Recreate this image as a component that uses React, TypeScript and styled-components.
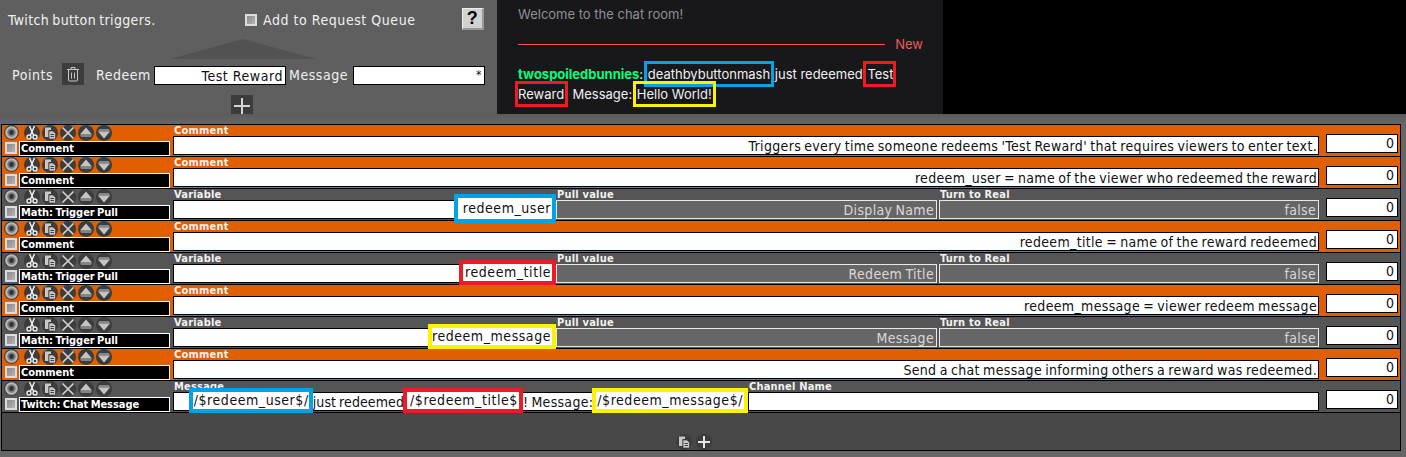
import React from "react";
import styled, { createGlobalStyle } from "styled-components";

const Global = createGlobalStyle`
  html, body { margin: 0; padding: 0; background: #000; }
  #root { width: 1406px; height: 457px; overflow: hidden; }
  * { box-sizing: border-box; }
`;

const UI = `"DejaVu Sans Condensed", "DejaVu Sans", sans-serif`;

const Page = styled.div`
  width: 1406px; height: 457px; background: #000; display: flex; flex-direction: column;
  font-family: ${UI}; font-stretch: condensed;
`;
const Top = styled.div`display: flex; height: 114px; flex: none;`;
const Settings = styled.div`
  width: 497px; background: #5f5f5f; color: #f0f0f0; font-size: 14px; letter-spacing: .55px;
  display: flex; flex-direction: column; align-items: center; overflow: hidden;
`;
const SettingsHead = styled.div`
  width: 100%; height: 27px; margin-top: 5px; display: flex; align-items: center; padding: 0 13px 0 8px;
`;
const Title = styled.div`width: 237px; flex: none; padding-top: 3px; letter-spacing: .35px; word-spacing: -1.1px;`;
const QueueLabel = styled.label`
  display: flex; align-items: center; gap: 6px; flex: 1; padding-top: 3px;
`;
const Check = styled.span`
  width: 12px; height: 12px; flex: none; display: block;
  background: linear-gradient(135deg, #8a8a8a, #b4b4b4); border: 2px solid #dcdcdc;
`;
const Help = styled.div`
  width: 22px; height: 22px; background: #d2d2d2; color: #000; font: bold 18px "Liberation Sans", sans-serif;
  display: flex; align-items: center; justify-content: center;
  border-right: 2px solid #999; border-bottom: 2px solid #999; border-top: 1px solid #eee; border-left: 1px solid #eee;
`;
const Peak = styled.div`
  width: 146px; height: 20px; margin: 7px 11px 0 0; background: #525252; clip-path: polygon(50% 0, 100% 100%, 0 100%); flex: none;
`;
const FormRow = styled.div`
  width: 100%; height: 22px; margin-top: 4px; display: flex; align-items: center; padding-left: 12px; flex: none;
`;
const FormText = styled.span<{ $w: number; $pad?: number }>`
  width: ${p => p.$w}px; padding-left: ${p => p.$pad ?? 0}px; padding-top: 2px; flex: none;
`;
const SquareButton = styled.div`
  width: 22px; height: 22px; background: #3c3c3c; display: flex; align-items: center; justify-content: center; flex: none;
`;
const TextBox = styled.div`
  width: 132px; height: 19px; background: #fff; border: 1px solid #000; color: #111; flex: none; align-self: flex-end;
  display: flex; justify-content: flex-end; align-items: center; padding-right: 2px; line-height: 1;
  letter-spacing: .55px;
`;
const Star = styled.span`align-self: flex-start; font-size: 12px; margin-top: 2px;`;
const PlusBox = styled(SquareButton)`height: 19px; margin: 10px 13px 0 0; align-items: flex-start; padding-top: 3px;`;

const Chat = styled.div`
  width: 446px; background: #18181b; padding: 7px 20px 0 21px; font: 13px/20px Inter, sans-serif; color: #efeff1;
`;
const Welcome = styled.div`color: #8f8f96; height: 15px; line-height: 15px;`;
const Divider = styled.div`
  display: flex; align-items: center; gap: 10px; color: #eb5b5b; height: 16px; margin-top: 14px;
  &::before { content: ""; flex: 1; height: 1px; background: #eb5b5b; }
`;
const Message = styled.div`margin-top: 12px; width: 400px;`;
const Who = styled.b`color: #00ff7f; font-weight: 700;`;
const Mark = styled.span<{ $c: string }>`
  outline: 3px solid ${p => p.$c}; padding: 2px 1px;
`;

const Editor = styled.div`
  flex: 1; padding: 10px 5px 6px 1px; min-height: 0; display: flex;
  background: linear-gradient(#5b5b5b, #666 10px, #666);
`;
const List = styled.div`
  flex: 1; border: 1px solid #000; background: #484848; display: flex; flex-direction: column;
`;
const Row = styled.div<{ $tone: "orange" | "grey" }>`
  height: 32px; flex: none; border-bottom: 1px solid #000; padding-left: 1px;
  background: ${p => (p.$tone === "orange" ? "#e15f00" : "#555")};
  display: flex;
`;
const Controls = styled.div`
  width: 170px; flex: none; display: grid; grid-template-columns: 16px 1fr; grid-template-rows: 16px 14px;
`;
const Tools = styled.div`display: flex; gap: 2px; padding-left: 5px; align-items: center; height: 16px;`;
const NameCheck = styled.div`display: flex; align-items: flex-end; padding: 0 0 1px 2px;`;
const Name = styled.div`
  width: 151px; height: 15px; background: #000; border: 1px solid #fff; color: #fff;
  font: bold 11px/13px ${UI}; padding-left: 1px; white-space: nowrap; letter-spacing: -.05px; word-spacing: -1px; overflow: hidden;
`;
const Fields = styled.div<{ $cols: string }>`
  width: 1146px; flex: none; display: grid; grid-template-columns: ${p => p.$cols};
`;
const Field = styled.div`min-width: 0; display: flex; flex-direction: column;`;
const FieldLabel = styled.div`
  height: 11px; font: bold 11px/11px ${UI}; color: #f2f2f2; letter-spacing: .2px; padding-left: 1px; white-space: nowrap;
`;
const FieldValue = styled.div<{ $dim?: boolean; $trim?: number; $pad?: number }>`
  height: 19px; white-space: nowrap; display: flex; justify-content: flex-end; align-items: center;
  padding-right: ${p => p.$pad ?? 3}px;
  font-size: 14px; letter-spacing: .33px; word-spacing: -1.1px;
  margin-right: ${p => p.$trim ?? 0}px;
  background: ${p => (p.$dim ? "#666" : "#fff")};
  color: ${p => (p.$dim ? "#d8d8d8" : "#111")};
  border: 1px solid ${p => (p.$dim ? "#e8e8e8" : "#000")};
`;
const Note = styled.span<{ $c: string; $left?: number; $right?: number; $h?: number }>`
  position: relative; z-index: 1; background: #fff; outline: 4px solid ${p => p.$c};
  padding: 0 ${p => p.$right ?? 1}px 0 ${p => p.$left ?? 1}px; line-height: ${p => p.$h ?? 17}px;
  margin-bottom: 2px; letter-spacing: .55px;
`;
const Plain = styled.span<{ $tight?: boolean }>`
  padding: 0 3px 0 4px; letter-spacing: ${p => (p.$tight ? ".1px" : ".3px")};
`;
const Amount = styled.div`
  width: 72px; height: 19px; margin: 9px 0 0 7px; background: #fff; border: 1px solid #000; flex: none;
  display: flex; align-items: center; justify-content: flex-end; padding: 0 3px 2px 0; color: #111;
  font-size: 14px; font-weight: 500;
`;
const Footer = styled.div`flex: 1; display: flex; align-items: flex-end; justify-content: center; gap: 4px; padding-right: 14px;`;

const Glyph: React.FC<{ children: React.ReactNode }> = ({ children }) => (
  <svg width="16" height="16" viewBox="0 0 16 16">
    <circle cx="8" cy="8" r="8" fill="#3c3c3c" />
    {children}
  </svg>
);
const Disc = () => (
  <svg width="15" height="15" viewBox="0 0 15 15" style={{ marginLeft: 1 }}>
    <circle cx="7.5" cy="7.5" r="7.5" fill="#444" />
    <circle cx="7.5" cy="7.5" r="6.3" fill="#b8b8b8" />
    <circle cx="7.5" cy="7.5" r="4.2" fill="#7d7d7d" />
    <circle cx="7.5" cy="7.5" r="2.4" fill="#333" />
  </svg>
);
const ScissorsIcon = () => (
  <Glyph>
    <path d="M5.5 1 9.5 10M10.5 1 6.5 10" stroke="#f0f0f0" strokeWidth="1.5" fill="none" />
    <circle cx="5" cy="12" r="2" stroke="#f0f0f0" strokeWidth="1.4" fill="none" />
    <circle cx="11" cy="12" r="2" stroke="#f0f0f0" strokeWidth="1.4" fill="none" />
  </Glyph>
);
const CopyShape = () => (
  <>
    <path d="M3 2.5h6v2.5H6.5v7H3z" fill="#c8c8c8" />
    <path d="M7 6h4l2.5 2.5V14H7z" fill="#c8c8c8" stroke="#333" strokeWidth=".6" />
    <path d="M8.5 9.5h3.5M8.5 11.5h3.5" stroke="#444" />
  </>
);
const CopyIcon = () => <Glyph><CopyShape /></Glyph>;
const CloseIcon = () => <Glyph><path d="M2.5 2.5l11 11M13.5 2.5l-11 11" stroke="#cfcfcf" strokeWidth="1.7" /></Glyph>;
const UpIcon = () => (
  <Glyph>
    <path d="M8 2.5 14 9.5H2z" fill="#c4c4c4" />
    <path d="M2 9.5h12l-1 2.5H3z" fill="#858585" />
  </Glyph>
);
const DownIcon = () => (
  <Glyph>
    <path d="M3 4h10l1 2.5H2z" fill="#858585" />
    <path d="M2 6.5h12L8 13.5z" fill="#c4c4c4" />
  </Glyph>
);
const PlusIcon = () => <Glyph><path d="M8 2v12M2 8h12" stroke="#e4e4e4" strokeWidth="2" /></Glyph>;
const Trash = () => (
  <svg width="14" height="16" viewBox="0 0 14 16" fill="none" stroke="#c8c8c8" strokeWidth="1">
    <path d="M1 3.5h12M2.5 3.5V14a1 1 0 0 0 1 1h7a1 1 0 0 0 1-1V3.5M5 3.5V1.5h4v2M5.5 6.5v6M8.5 6.5v6" />
  </svg>
);

const BLUE = "#00a2e8", RED = "#ed1c24", YELLOW = "#fff200";
type Item = { name: string; comment?: string; kind?: "math" | "chat"; variable?: React.ReactNode; pull?: string };
const rows: Item[] = [
  { name: "Comment", comment: "Triggers every time someone redeems 'Test Reward' that requires viewers to enter text." },
  { name: "Comment", comment: "redeem_user = name of the viewer who redeemed the reward" },
  { name: "Math: Trigger Pull", kind: "math", pull: "Display Name", variable: <Note $c={BLUE} $left={5} $h={21}>redeem_user</Note> },
  { name: "Comment", comment: "redeem_title = name of the reward redeemed" },
  { name: "Math: Trigger Pull", kind: "math", pull: "Redeem Title", variable: <Note $c={RED} $left={2}>redeem_title</Note> },
  { name: "Comment", comment: "redeem_message = viewer redeem message" },
  { name: "Math: Trigger Pull", kind: "math", pull: "Message", variable: <Note $c={YELLOW} $left={0}>redeem_message</Note> },
  { name: "Comment", comment: "Send a chat message informing others a reward was redeemed." },
  { name: "Twitch: Chat Message", kind: "chat" },
];

const FieldsFor: React.FC<{ item: Item }> = ({ item }) => {
  if (item.kind === "math") {
    return (
      <Fields $cols="383px 383px 380px">
        <Field><FieldLabel>Variable</FieldLabel><FieldValue>{item.variable}</FieldValue></Field>
        <Field><FieldLabel>Pull value</FieldLabel><FieldValue $dim $trim={2} $pad={2}>{item.pull}</FieldValue></Field>
        <Field><FieldLabel>Turn to Real</FieldLabel><FieldValue $dim $pad={2}>false</FieldValue></Field>
      </Fields>
    );
  }
  if (item.kind === "chat") {
    return (
      <Fields $cols="575px 571px">
        <Field>
          <FieldLabel>Message</FieldLabel>
          <FieldValue>
            <Note $c={BLUE} $right={0}>/$redeem_user$/</Note>
            <Plain $tight>just redeemed</Plain>
            <Note $c={RED} $left={3}>/$redeem_title$</Note>
            <Plain>! Message:</Plain>
            <Note $c={YELLOW}>/$redeem_message$/</Note>
          </FieldValue>
        </Field>
        <Field><FieldLabel>Channel Name</FieldLabel><FieldValue /></Field>
      </Fields>
    );
  }
  return (
    <Fields $cols="1fr">
      <Field><FieldLabel>Comment</FieldLabel><FieldValue $pad={1}>{item.comment}</FieldValue></Field>
    </Fields>
  );
};

export default function App() {
  return (
    <Page>
      <Global />
      <Top>
        <Settings>
          <SettingsHead>
            <Title>Twitch button triggers.</Title>
            <QueueLabel><Check />Add to Request Queue</QueueLabel>
            <Help>?</Help>
          </SettingsHead>
          <Peak />
          <FormRow>
            <FormText $w={50}>Points</FormText>
            <SquareButton><Trash /></SquareButton>
            <FormText $w={70} $pad={12}>Redeem</FormText>
            <TextBox>Test Reward</TextBox>
            <FormText $w={67} $pad={3}>Message</FormText>
            <TextBox><Star>*</Star></TextBox>
          </FormRow>
          <PlusBox><svg width="16" height="16" viewBox="0 0 16 16"><path d="M8 0v16M0 8h16" stroke="#d4d4d4" strokeWidth="2" /></svg></PlusBox>
        </Settings>
        <Chat>
          <Welcome>Welcome to the chat room!</Welcome>
          <Divider>New</Divider>
          <Message>
            <Who>twospoiledbunnies</Who>: <Mark $c={BLUE}>deathbybuttonmash</Mark> just redeemed <Mark $c={RED}>Test Reward</Mark>! Message: <Mark $c={YELLOW}>Hello World!</Mark>
          </Message>
        </Chat>
      </Top>
      <Editor>
        <List>
          {rows.map((r, i) => (
            <Row key={i} $tone={r.kind ? "grey" : "orange"}>
              <Controls>
                <Disc />
                <Tools><ScissorsIcon /><CopyIcon /><CloseIcon /><UpIcon /><DownIcon /></Tools>
                <NameCheck><Check /></NameCheck>
                <Name>{r.name}</Name>
              </Controls>
              <FieldsFor item={r} />
              <Amount>0</Amount>
            </Row>
          ))}
          <Footer><CopyIcon /><PlusIcon /></Footer>
        </List>
      </Editor>
    </Page>
  );
}
